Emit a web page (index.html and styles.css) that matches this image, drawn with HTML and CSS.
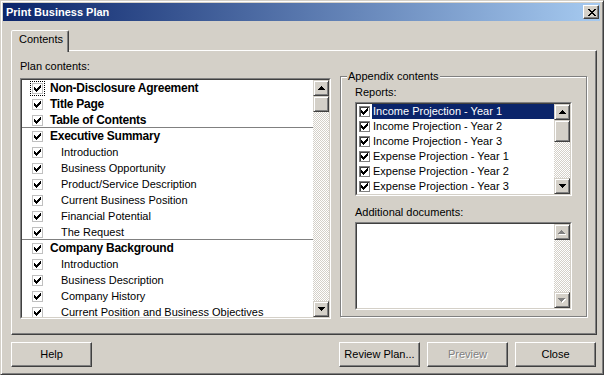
FILE: index.html
```html
<!DOCTYPE html>
<html lang="en">
<head>
<meta charset="utf-8">
<title>Print Business Plan</title>
<link rel="stylesheet" href="styles.css">
</head>
<body>
<div class="window">
  <div class="titlebar">
    <span class="title">Print Business Plan</span>
    <span class="tb-close"><svg width="8" height="7" viewBox="0 0 8 7" shape-rendering="crispEdges"><path d="M0 0h2v1h-2zM6 0h2v1h-2zM1 1h2v1h-2zM5 1h2v1h-2zM2 2h4v1h-4zM3 3h2v1h-2zM2 4h4v1h-4zM1 5h2v1h-2zM5 5h2v1h-2zM0 6h2v1h-2zM6 6h2v1h-2z" fill="#000"/></svg></span>
  </div>
  <div class="body">
    <div class="tabs"><div class="tab">Contents</div></div>
    <div class="panel">
      <div class="plan-col">
        <div class="label">Plan contents:</div>
        <div class="listbox plan-list">
          <div class="lb-in">
            <ul class="rows">
              <li class="row bold focus"><span class="cb"><svg viewBox="0 0 7 7" shape-rendering="crispEdges"><path d="M6 0h1v1h-1zM5 1h2v1h-2zM0 2h1v1h-1zM4 2h3v1h-3zM0 3h2v1h-2zM3 3h3v1h-3zM0 4h5v1h-5zM1 5h3v1h-3zM2 6h1v1h-1z"/></svg></span><span class="txt">Non-Disclosure Agreement</span></li>
              <li class="row bold"><span class="cb"><svg viewBox="0 0 7 7" shape-rendering="crispEdges"><path d="M6 0h1v1h-1zM5 1h2v1h-2zM0 2h1v1h-1zM4 2h3v1h-3zM0 3h2v1h-2zM3 3h3v1h-3zM0 4h5v1h-5zM1 5h3v1h-3zM2 6h1v1h-1z"/></svg></span><span class="txt">Title Page</span></li>
              <li class="row bold sep"><span class="cb"><svg viewBox="0 0 7 7" shape-rendering="crispEdges"><path d="M6 0h1v1h-1zM5 1h2v1h-2zM0 2h1v1h-1zM4 2h3v1h-3zM0 3h2v1h-2zM3 3h3v1h-3zM0 4h5v1h-5zM1 5h3v1h-3zM2 6h1v1h-1z"/></svg></span><span class="txt">Table of Contents</span></li>
              <li class="row bold"><span class="cb"><svg viewBox="0 0 7 7" shape-rendering="crispEdges"><path d="M6 0h1v1h-1zM5 1h2v1h-2zM0 2h1v1h-1zM4 2h3v1h-3zM0 3h2v1h-2zM3 3h3v1h-3zM0 4h5v1h-5zM1 5h3v1h-3zM2 6h1v1h-1z"/></svg></span><span class="txt">Executive Summary</span></li>
              <li class="row sub"><span class="cb"><svg viewBox="0 0 7 7" shape-rendering="crispEdges"><path d="M6 0h1v1h-1zM5 1h2v1h-2zM0 2h1v1h-1zM4 2h3v1h-3zM0 3h2v1h-2zM3 3h3v1h-3zM0 4h5v1h-5zM1 5h3v1h-3zM2 6h1v1h-1z"/></svg></span><span class="txt">Introduction</span></li>
              <li class="row sub"><span class="cb"><svg viewBox="0 0 7 7" shape-rendering="crispEdges"><path d="M6 0h1v1h-1zM5 1h2v1h-2zM0 2h1v1h-1zM4 2h3v1h-3zM0 3h2v1h-2zM3 3h3v1h-3zM0 4h5v1h-5zM1 5h3v1h-3zM2 6h1v1h-1z"/></svg></span><span class="txt">Business Opportunity</span></li>
              <li class="row sub"><span class="cb"><svg viewBox="0 0 7 7" shape-rendering="crispEdges"><path d="M6 0h1v1h-1zM5 1h2v1h-2zM0 2h1v1h-1zM4 2h3v1h-3zM0 3h2v1h-2zM3 3h3v1h-3zM0 4h5v1h-5zM1 5h3v1h-3zM2 6h1v1h-1z"/></svg></span><span class="txt">Product/Service Description</span></li>
              <li class="row sub"><span class="cb"><svg viewBox="0 0 7 7" shape-rendering="crispEdges"><path d="M6 0h1v1h-1zM5 1h2v1h-2zM0 2h1v1h-1zM4 2h3v1h-3zM0 3h2v1h-2zM3 3h3v1h-3zM0 4h5v1h-5zM1 5h3v1h-3zM2 6h1v1h-1z"/></svg></span><span class="txt">Current Business Position</span></li>
              <li class="row sub"><span class="cb"><svg viewBox="0 0 7 7" shape-rendering="crispEdges"><path d="M6 0h1v1h-1zM5 1h2v1h-2zM0 2h1v1h-1zM4 2h3v1h-3zM0 3h2v1h-2zM3 3h3v1h-3zM0 4h5v1h-5zM1 5h3v1h-3zM2 6h1v1h-1z"/></svg></span><span class="txt">Financial Potential</span></li>
              <li class="row sub sep"><span class="cb"><svg viewBox="0 0 7 7" shape-rendering="crispEdges"><path d="M6 0h1v1h-1zM5 1h2v1h-2zM0 2h1v1h-1zM4 2h3v1h-3zM0 3h2v1h-2zM3 3h3v1h-3zM0 4h5v1h-5zM1 5h3v1h-3zM2 6h1v1h-1z"/></svg></span><span class="txt">The Request</span></li>
              <li class="row bold"><span class="cb"><svg viewBox="0 0 7 7" shape-rendering="crispEdges"><path d="M6 0h1v1h-1zM5 1h2v1h-2zM0 2h1v1h-1zM4 2h3v1h-3zM0 3h2v1h-2zM3 3h3v1h-3zM0 4h5v1h-5zM1 5h3v1h-3zM2 6h1v1h-1z"/></svg></span><span class="txt">Company Background</span></li>
              <li class="row sub"><span class="cb"><svg viewBox="0 0 7 7" shape-rendering="crispEdges"><path d="M6 0h1v1h-1zM5 1h2v1h-2zM0 2h1v1h-1zM4 2h3v1h-3zM0 3h2v1h-2zM3 3h3v1h-3zM0 4h5v1h-5zM1 5h3v1h-3zM2 6h1v1h-1z"/></svg></span><span class="txt">Introduction</span></li>
              <li class="row sub"><span class="cb"><svg viewBox="0 0 7 7" shape-rendering="crispEdges"><path d="M6 0h1v1h-1zM5 1h2v1h-2zM0 2h1v1h-1zM4 2h3v1h-3zM0 3h2v1h-2zM3 3h3v1h-3zM0 4h5v1h-5zM1 5h3v1h-3zM2 6h1v1h-1z"/></svg></span><span class="txt">Business Description</span></li>
              <li class="row sub"><span class="cb"><svg viewBox="0 0 7 7" shape-rendering="crispEdges"><path d="M6 0h1v1h-1zM5 1h2v1h-2zM0 2h1v1h-1zM4 2h3v1h-3zM0 3h2v1h-2zM3 3h3v1h-3zM0 4h5v1h-5zM1 5h3v1h-3zM2 6h1v1h-1z"/></svg></span><span class="txt">Company History</span></li>
              <li class="row sub"><span class="cb"><svg viewBox="0 0 7 7" shape-rendering="crispEdges"><path d="M6 0h1v1h-1zM5 1h2v1h-2zM0 2h1v1h-1zM4 2h3v1h-3zM0 3h2v1h-2zM3 3h3v1h-3zM0 4h5v1h-5zM1 5h3v1h-3zM2 6h1v1h-1z"/></svg></span><span class="txt">Current Position and Business Objectives</span></li>
            </ul>
            <div class="vscroll">
              <div class="sb-btn"><svg width="7" height="4" viewBox="0 0 7 4" shape-rendering="crispEdges"><path d="M3 0h1v1h-1zM2 1h3v1h-3zM1 2h5v1h-5zM0 3h7v1h-7z"/></svg></div>
              <div class="sb-thumb t16"></div>
              <div class="sb-track"></div>
              <div class="sb-btn"><svg width="7" height="4" viewBox="0 0 7 4" shape-rendering="crispEdges"><path d="M0 0h7v1h-7zM1 1h5v1h-5zM2 2h3v1h-3zM3 3h1v1h-1z"/></svg></div>
            </div>
          </div>
        </div>
      </div>
      <fieldset class="appendix">
        <legend>Appendix contents</legend>
        <div class="label first">Reports:</div>
        <div class="listbox reports">
          <div class="lb-in">
            <ul class="rows">
              <li class="rrow sel"><span class="cb2"><svg viewBox="0 0 7 7" shape-rendering="crispEdges"><path d="M6 0h1v1h-1zM5 1h2v1h-2zM0 2h1v1h-1zM4 2h3v1h-3zM0 3h2v1h-2zM3 3h3v1h-3zM0 4h5v1h-5zM1 5h3v1h-3zM2 6h1v1h-1z"/></svg></span><span class="txt">Income Projection - Year 1</span></li>
              <li class="rrow"><span class="cb2"><svg viewBox="0 0 7 7" shape-rendering="crispEdges"><path d="M6 0h1v1h-1zM5 1h2v1h-2zM0 2h1v1h-1zM4 2h3v1h-3zM0 3h2v1h-2zM3 3h3v1h-3zM0 4h5v1h-5zM1 5h3v1h-3zM2 6h1v1h-1z"/></svg></span><span class="txt">Income Projection - Year 2</span></li>
              <li class="rrow"><span class="cb2"><svg viewBox="0 0 7 7" shape-rendering="crispEdges"><path d="M6 0h1v1h-1zM5 1h2v1h-2zM0 2h1v1h-1zM4 2h3v1h-3zM0 3h2v1h-2zM3 3h3v1h-3zM0 4h5v1h-5zM1 5h3v1h-3zM2 6h1v1h-1z"/></svg></span><span class="txt">Income Projection - Year 3</span></li>
              <li class="rrow"><span class="cb2"><svg viewBox="0 0 7 7" shape-rendering="crispEdges"><path d="M6 0h1v1h-1zM5 1h2v1h-2zM0 2h1v1h-1zM4 2h3v1h-3zM0 3h2v1h-2zM3 3h3v1h-3zM0 4h5v1h-5zM1 5h3v1h-3zM2 6h1v1h-1z"/></svg></span><span class="txt">Expense Projection - Year 1</span></li>
              <li class="rrow"><span class="cb2"><svg viewBox="0 0 7 7" shape-rendering="crispEdges"><path d="M6 0h1v1h-1zM5 1h2v1h-2zM0 2h1v1h-1zM4 2h3v1h-3zM0 3h2v1h-2zM3 3h3v1h-3zM0 4h5v1h-5zM1 5h3v1h-3zM2 6h1v1h-1z"/></svg></span><span class="txt">Expense Projection - Year 2</span></li>
              <li class="rrow"><span class="cb2"><svg viewBox="0 0 7 7" shape-rendering="crispEdges"><path d="M6 0h1v1h-1zM5 1h2v1h-2zM0 2h1v1h-1zM4 2h3v1h-3zM0 3h2v1h-2zM3 3h3v1h-3zM0 4h5v1h-5zM1 5h3v1h-3zM2 6h1v1h-1z"/></svg></span><span class="txt">Expense Projection - Year 3</span></li>
            </ul>
            <div class="vscroll">
              <div class="sb-btn"><svg width="7" height="4" viewBox="0 0 7 4" shape-rendering="crispEdges"><path d="M3 0h1v1h-1zM2 1h3v1h-3zM1 2h5v1h-5zM0 3h7v1h-7z"/></svg></div>
              <div class="sb-thumb t22"></div>
              <div class="sb-track"></div>
              <div class="sb-btn"><svg width="7" height="4" viewBox="0 0 7 4" shape-rendering="crispEdges"><path d="M0 0h7v1h-7zM1 1h5v1h-5zM2 2h3v1h-3zM3 3h1v1h-1z"/></svg></div>
            </div>
          </div>
        </div>
        <div class="label add-label">Additional documents:</div>
        <div class="listbox docs">
          <div class="lb-in">
            <div class="rows"></div>
            <div class="vscroll">
              <div class="sb-btn"><svg width="8" height="5" viewBox="0 0 8 5" shape-rendering="crispEdges"><path d="M4 1h1v1h-1zM3 2h3v1h-3zM2 3h5v1h-5zM1 4h7v1h-7z" fill="#fff"/><path d="M3 0h1v1h-1zM2 1h3v1h-3zM1 2h5v1h-5zM0 3h7v1h-7z" fill="#808080"/></svg></div>
              <div class="sb-track"></div>
              <div class="sb-btn"><svg width="8" height="5" viewBox="0 0 8 5" shape-rendering="crispEdges"><path d="M1 1h7v1h-7zM2 2h5v1h-5zM3 3h3v1h-3zM4 4h1v1h-1z" fill="#fff"/><path d="M0 0h7v1h-7zM1 1h5v1h-5zM2 2h3v1h-3zM3 3h1v1h-1z" fill="#808080"/></svg></div>
            </div>
          </div>
        </div>
      </fieldset>
    </div>
    <div class="buttons">
      <button class="btn">Help</button>
      <button class="btn push">Review Plan...</button>
      <button class="btn disabled">Preview</button>
      <button class="btn">Close</button>
    </div>
  </div>
</div>
</body>
</html>
```

FILE: styles.css
```css
* { box-sizing: border-box; }
html, body { margin: 0; padding: 0; }
body {
  width: 604px;
  height: 375px;
  overflow: hidden;
  background: #d4d0c8;
  font: 11px/13px "Liberation Sans", Arial, sans-serif;
  color: #000;
}

.window {
  width: 604px;
  height: 375px;
  display: flex;
  flex-direction: column;
  padding: 2px 3px 3px 2px;
  background: #d4d0c8;
  border: 1px solid;
  border-color: #d4d0c8 #404040 #404040 #d4d0c8;
  box-shadow: inset 1px 1px #fff, inset -1px -1px #808080;
}

.titlebar {
  height: 18px;
  flex: none;
  display: flex;
  align-items: center;
  justify-content: space-between;
  padding: 0 1px 0 3px;
  background: linear-gradient(to right, #0a246a, #a6caf0);
  color: #fff;
  font-weight: bold;
}

.tb-close {
  width: 16px;
  height: 14px;
  display: flex;
  align-items: center;
  justify-content: center;
  padding-left: 1px;
  background: #d4d0c8;
  border: 1px solid;
  border-color: #fff #404040 #404040 #fff;
  box-shadow: inset -1px -1px #808080;
}
.tb-close svg { display: block; }

.body {
  flex: 1;
  display: flex;
  flex-direction: column;
  padding: 9px 3px 0 8px;
}

.tabs { display: flex; height: 20px; flex: none; }
.tab {
  position: relative;
  z-index: 1;
  height: 22px;
  padding: 2px 5px 0 7px;
  background: #d4d0c8;
  border: 1px solid;
  border-bottom: none;
  border-color: #fff #404040 transparent #fff;
  border-radius: 2px 2px 0 0;
  box-shadow: inset -1px 0 #808080;
}

.panel {
  height: 285px;
  flex: none;
  display: flex;
  align-items: flex-start;
  gap: 9px;
  padding: 9px 0 0 8px;
  border: 1px solid;
  border-color: #fff #404040 #404040 #fff;
  box-shadow: inset -1px -1px #808080;
}

.plan-col { width: 311px; flex: none; }
.label { height: 13px; white-space: nowrap; }

.listbox {
  background: #fff;
  border: 1px solid;
  border-color: #808080 #fff #fff #808080;
}
.lb-in {
  height: 100%;
  display: flex;
  border: 1px solid;
  border-color: #404040 #d4d0c8 #d4d0c8 #404040;
}
.rows {
  flex: 1;
  min-width: 0;
  margin: 0;
  padding: 0;
  list-style: none;
  overflow: hidden;
}

.plan-list { margin-top: 5px; height: 241px; }

.row {
  height: 16px;
  display: flex;
  align-items: center;
  padding-left: 10px;
  white-space: nowrap;
}
.row.sep { box-shadow: inset 0 -1px #808080; }
.cb {
  width: 11px;
  height: 11px;
  flex: none;
  padding: 1px;
  border: 1px solid #c0c0c0;
  background: #fff;
}
.cb svg, .cb2 svg { display: block; width: 7px; height: 7px; fill: #000; }
.row.focus .cb { outline: 1px dotted #000; outline-offset: 1px; }
.row .txt { margin-left: 7px; }
.row.sub .txt { margin-left: 18px; }
.row.bold .txt { font-weight: bold; font-size: 12px; letter-spacing: -0.25px; }

.vscroll {
  width: 16px;
  flex: none;
  display: flex;
  flex-direction: column;
}
.sb-btn, .sb-thumb {
  flex: none;
  background: #d4d0c8;
  border: 1px solid;
  border-color: #d4d0c8 #404040 #404040 #d4d0c8;
  box-shadow: inset 1px 1px #fff, inset -1px -1px #808080;
}
.sb-btn {
  height: 16px;
  display: flex;
  align-items: center;
  justify-content: center;
}
.sb-btn svg { display: block; }
.sb-thumb.t16 { height: 16px; }
.sb-thumb.t22 { height: 22px; }
.sb-track {
  flex: 1;
  background: repeating-conic-gradient(#d4d0c8 0 25%, #fff 0 50%) 0 0 / 2px 2px;
}

.appendix {
  flex: none;
  margin: 10px 0 0;
  padding: 0 14px;
  min-width: 0;
  width: 247px;
  height: 247px;
  border: 1px solid #808080;
  box-shadow: inset 1px 1px #fff, 1px 1px #fff;
}
.appendix legend {
  margin-left: -8px;
  padding: 0 1px;
  line-height: 13px;
  background: #d4d0c8;
}
.label.first { margin-top: 3px; }
.reports { margin-top: 3px; height: 94px; width: 217px; }
.rrow {
  height: 15px;
  display: flex;
  align-items: center;
  padding-left: 2px;
  white-space: nowrap;
}
.cb2 {
  width: 11px;
  height: 11px;
  flex: none;
  padding: 1px;
  border: 1px solid #808080;
  box-shadow: inset 1px 1px #404040;
  background: #fff;
}
.rrow .txt {
  flex: 1;
  margin-left: 2px;
  padding-left: 1px;
  height: 15px;
  line-height: 15px;
}
.rrow.sel .txt { background: #0a246a; color: #fff; }

.add-label { margin-top: 10px; }
.docs { margin-top: 3px; height: 88px; width: 217px; }

.buttons {
  display: flex;
  height: 25px;
  margin-top: 7px;
  padding-right: 1px;
  gap: 7px;
}
.btn {
  width: 81px;
  height: 25px;
  padding: 0;
  margin: 0;
  font: inherit;
  color: #000;
  background: #d4d0c8;
  border: 1px solid;
  border-color: #fff #404040 #404040 #fff;
  border-radius: 0;
  box-shadow: inset -1px -1px #808080;
}
.btn.push { margin-left: auto; }
.btn.disabled { color: #808080; text-shadow: 1px 1px #fff; }
```
